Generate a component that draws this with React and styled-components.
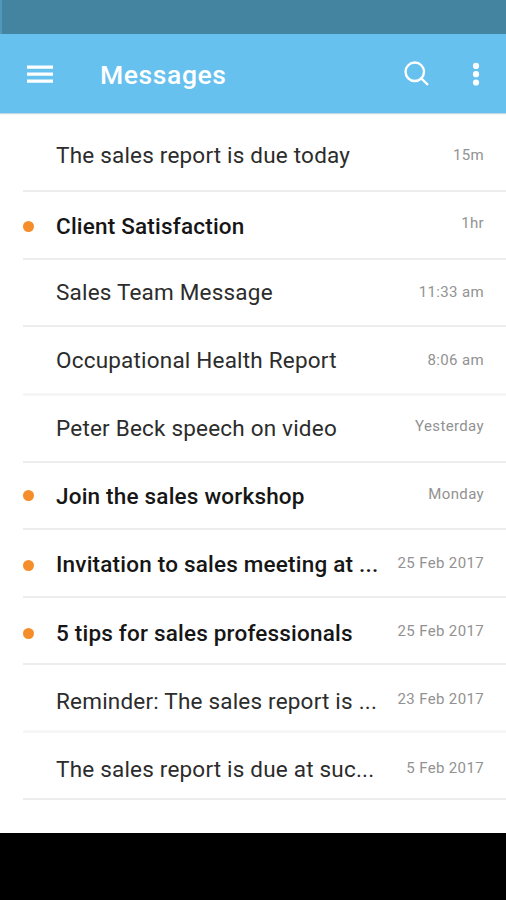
import React from 'react';
import styled, { createGlobalStyle } from 'styled-components';

const GlobalStyle = createGlobalStyle`
	* {
		box-sizing: border-box;
	}

	body {
		margin: 0;
		background: #fff;
		font-family: Roboto, "Liberation Sans", sans-serif;
	}
`;

const Screen = styled.div`
	display: flex;
	flex-direction: column;
	width: 100%;
	height: 900px;
	overflow: hidden;
	background: #fff;
`;

const StatusBar = styled.div`
	flex: none;
	height: 34px;
	background: #4584a1;
	border-left: 2px solid #4e98bb;
`;

const AppBar = styled.header`
	display: flex;
	flex: none;
	align-items: center;
	height: 79px;
	padding: 0 26px;
	background: #66c1ee;
	color: #fff;
	box-shadow: 0 1px 1px rgba(70, 140, 175, .35);
`;

const IconButton = styled.button`
	display: flex;
	padding: 0;
	border: 0;
	background: none;
	color: inherit;
	margin-left: ${props => props.$gap || 0}px;

	> svg {
		display: block;
	}
`;

const PageTitle = styled.h1`
	flex: 1;
	margin: 3px 0 0 46px;
	font-size: 26.5px;
	line-height: 30px;
	font-weight: 500;
	letter-spacing: .6px;
`;

const MessageList = styled.ul`
	flex: 1;
	margin: 0;
	padding: 0 0 0 23px;
	list-style: none;
`;

const MessageRow = styled.li`
	display: flex;
	align-items: flex-start;
	height: ${props => props.$height}px;
	padding-right: 22px;
	border-bottom: ${props => props.$soft ? '3px solid #f6f6f6' : '2px solid #ededed'};
`;

const UnreadDot = styled.span`
	flex: none;
	width: 11px;
	height: 11px;
	margin-top: ${props => props.$top || 0}px;
	border-radius: 50%;
	background: ${props => props.$top ? '#f58e2a' : 'transparent'};
`;

const Subject = styled.span`
	flex: 1;
	margin: ${props => props.$top}px 0 0 22px;
	font-size: 22.5px;
	line-height: 28px;
	font-weight: ${props => props.$unread ? 500 : 400};
	letter-spacing: .2px;
	white-space: nowrap;
	color: ${props => props.$unread ? '#161616' : '#2c2c2c'};
`;

const Time = styled.time`
	margin-top: ${props => props.$top}px;
	font-size: 15px;
	line-height: 18px;
	letter-spacing: .36px;
	white-space: nowrap;
	color: #929292;
`;

// top, timeTop and dotTop are the offsets of the parts in their row, only unread messages have a dot
const messages = [
	{ subject: 'The sales report is due today', time: '15m', height: 79, top: 28, timeTop: 33 },
	{ subject: 'Client Satisfaction', time: '1hr', height: 68, top: 20, timeTop: 22, dotTop: 29 },
	{ subject: 'Sales Team Message', time: '11:33 am', height: 67, top: 18, timeTop: 23 },
	{ subject: 'Occupational Health Report', time: '8:06 am', height: 69, top: 19, timeTop: 24, soft: true },
	{ subject: 'Peter Beck speech on video', time: 'Yesterday', height: 67, top: 18, timeTop: 21 },
	{ subject: 'Join the sales workshop', time: 'Monday', height: 67, top: 19, timeTop: 22, dotTop: 27 },
	{ subject: 'Invitation to sales meeting at ...', time: '25 Feb 2017', height: 68, top: 20, timeTop: 24, dotTop: 30 },
	{ subject: '5 tips for sales professionals', time: '25 Feb 2017', height: 67, top: 21, timeTop: 24, dotTop: 30 },
	{ subject: 'Reminder: The sales report is ...', time: '23 Feb 2017', height: 68, top: 22, timeTop: 25, soft: true },
	{ subject: 'The sales report is due at suc...', time: '5 Feb 2017', height: 67, top: 22, timeTop: 26 },
];

const NavigationBar = styled.div`
	flex: none;
	height: 67px;
	background: #000;
`;

const MenuIcon = () => (
	<svg width="28" height="20" viewBox="0 0 28 20" fill="currentColor">
		<path d="M1 1.5h26v3.2H1zM1 8.5h26v3.2H1zM1 15.5h26v3.2H1z" />
	</svg>
);

const SearchIcon = () => (
	<svg width="25" height="25" viewBox="0 0 26 26" fill="none" stroke="currentColor" strokeWidth="2.5" strokeLinecap="round">
		<circle cx="11.2" cy="11.2" r="9.6" />
		<path d="M18 18l6.2 6.2" />
	</svg>
);

const MoreIcon = () => (
	<svg width="8" height="24" viewBox="0 0 8 24" fill="currentColor">
		<circle cx="4" cy="3.9" r="3.1" />
		<circle cx="4" cy="12.2" r="3.1" />
		<circle cx="4" cy="20.5" r="3.1" />
	</svg>
);

const App = () => (
	<Screen>
		<GlobalStyle />
		<StatusBar />
		<AppBar>
			<IconButton aria-label="Menu"><MenuIcon /></IconButton>
			<PageTitle>Messages</PageTitle>
			<IconButton aria-label="Search"><SearchIcon /></IconButton>
			<IconButton aria-label="More" $gap={43}><MoreIcon /></IconButton>
		</AppBar>
		<MessageList>
			{messages.map(({ subject, time, height, top, timeTop, dotTop, soft }) => (
				<MessageRow key={subject} $height={height} $soft={soft}>
					<UnreadDot $top={dotTop} />
					<Subject $unread={!!dotTop} $top={top}>{subject}</Subject>
					<Time $top={timeTop}>{time}</Time>
				</MessageRow>
			))}
		</MessageList>
		<NavigationBar />
	</Screen>
);

export default App;
